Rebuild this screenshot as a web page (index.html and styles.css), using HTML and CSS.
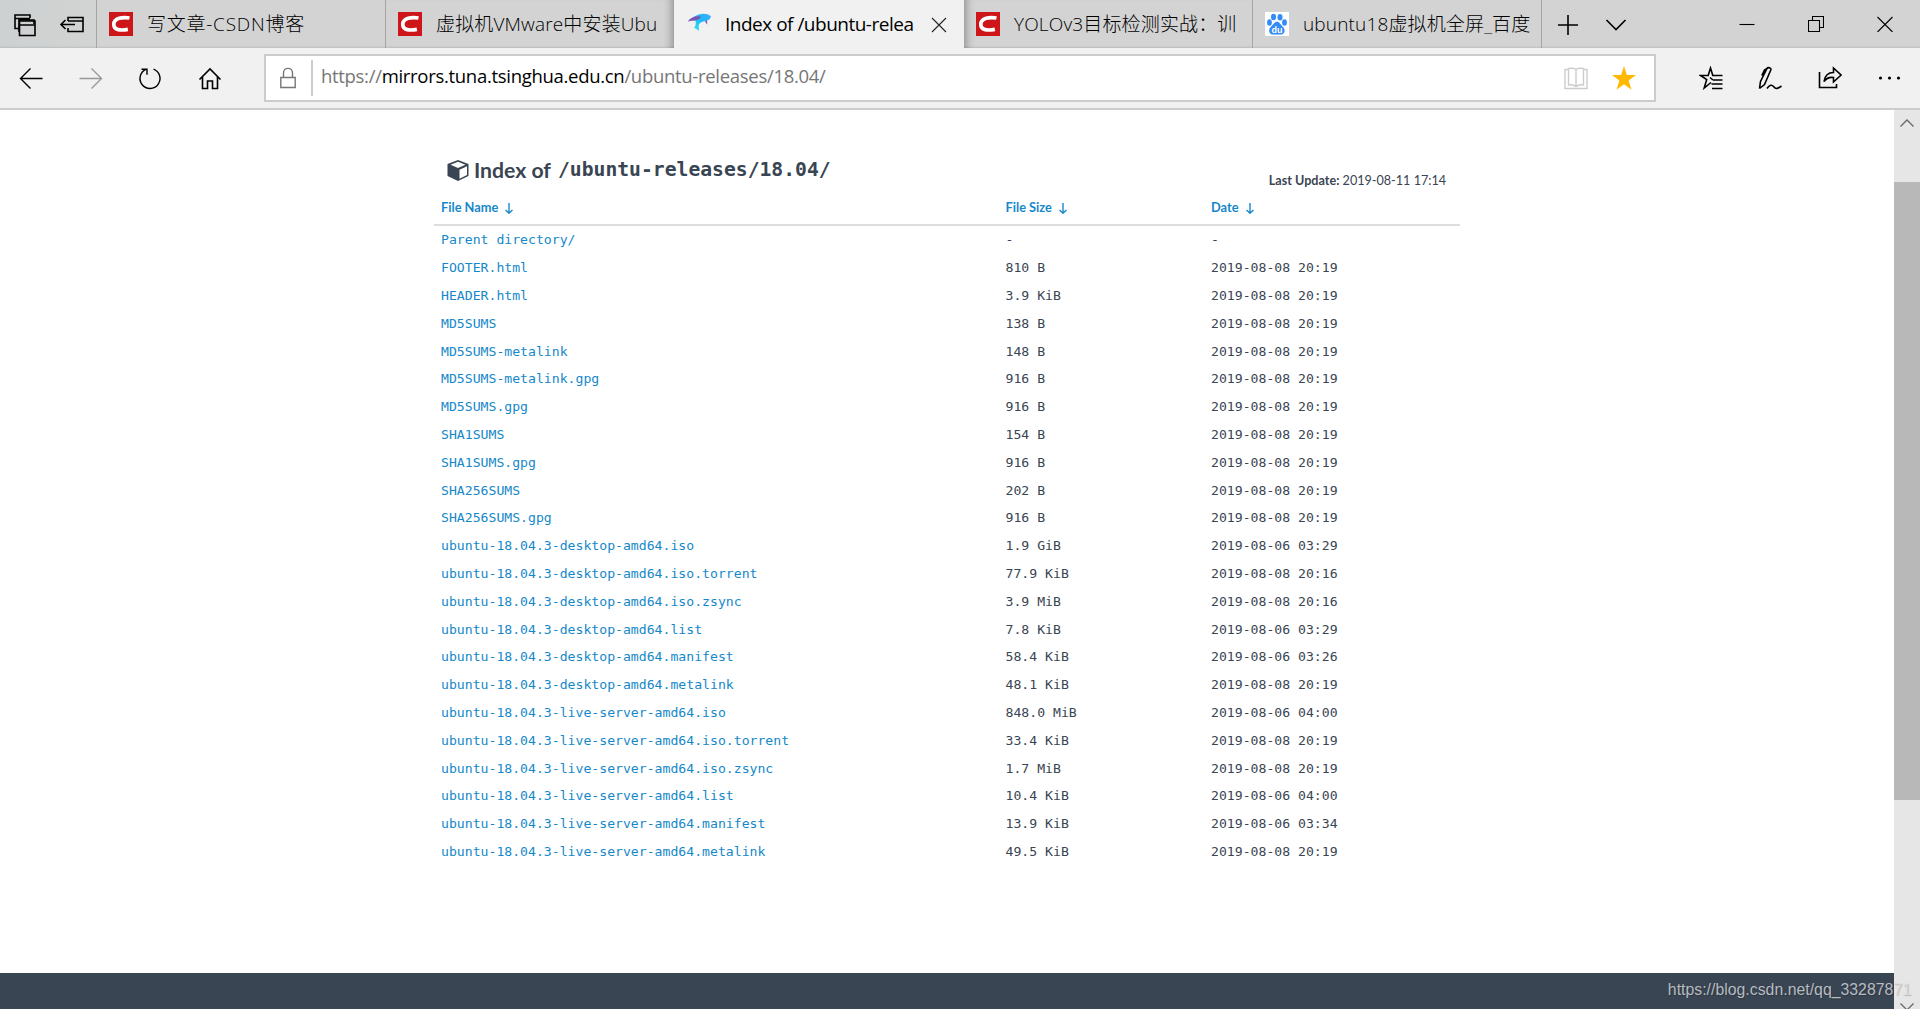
FILE: index.html
```html
<!DOCTYPE html>
<html lang="zh-CN">
<head>
<meta charset="utf-8">
<title>Index of /ubuntu-releases/18.04/</title>
<link rel="stylesheet" href="styles.css">
</head>
<body>
<svg class="defs" aria-hidden="true">
  <symbol id="csdn" viewBox="0 0 24 24"><path fill="#ce1519" d="M0 0h24v24H0z"/><path d="M20.500 6C13.500 4.800 5 6 4.800 12.300 4.700 18.500 12 18.600 18.900 17.400" fill="none" stroke="#fff" stroke-width="3.700"/></symbol>
</svg>
<header class="tabs">
  <div class="tab-tools">
    <svg width="24" height="24" viewBox="0 0 24 24"><g class="line bold"><path d="M5.500 15.500H2V2h15v3M2 5.500h15M6 19V7h15v4M10.500 7H6"/><path d="M6.500 8h15.500v14.500H6.500zM6.500 12h15.500"/></g></svg>
    <svg width="26" height="24" viewBox="0 0 26 24"><g class="line bold"><path d="M9 8V4.500h15v14H9V15M9 8h15M16 11.500H2M6.500 7L2 11.500 6.500 16"/></g></svg>
  </div>
  <div class="tab"><svg class="fav"><use href="#csdn"/></svg><span class="t1">写文章-CSDN博客</span></div>
  <div class="tab before"><svg class="fav"><use href="#csdn"/></svg><span class="t2">虚拟机VMware中安装Ubu</span></div>
  <div class="tab active">
    <svg class="fav" viewBox="0 0 24 24"><defs><linearGradient id="dolphin" x1="0" y1="1" x2="1" y2="0"><stop stop-color="#35e2ef"/><stop offset=".55" stop-color="#1bb7f8"/><stop offset="1" stop-color="#49a9f8"/></linearGradient></defs><path fill="url(#dolphin)" d="M7.500 4.500C12 1 20 .500 24 4.200c-.500 2.800-3 4.600-6.500 5-4 .500-5.800 2.500-5.800 4.800 0 2 .300 3.500.500 5-1.200-1.500-3.500-2-5.200-3.200C10 13 8.500 8 7.500 4.500z"/><path fill="#7655b5" d="M.5 10C3 5.500 8 3.600 14 4.500 12.500 7.500 9 8.800 6.500 8.800 4 8.800 2 9 .5 10z"/><path fill="#8253b2" d="M18 9.200l2-.800.200 4.400z"/></svg>
    <span class="t3">Index of /ubuntu-relea</span>
    <svg class="tab-close" width="16" height="16" viewBox="0 0 16 16"><path class="line" d="M1 1l14 14M15 1L1 15"/></svg>
  </div>
  <div class="tab after"><svg class="fav"><use href="#csdn"/></svg><span class="t4">YOLOv3目标检测实战：训</span></div>
  <div class="tab">
    <svg class="fav" viewBox="0 0 24 24"><path fill="#fff" d="M0 0h24v24H0z"/><g fill="#318cf5"><ellipse cx="8.500" cy="5" rx="2.500" ry="3.300"/><ellipse cx="15" cy="5.200" rx="2.500" ry="3.200"/><ellipse cx="4.500" cy="10.500" rx="2.400" ry="3.200"/><ellipse cx="19.500" cy="10.500" rx="2.400" ry="3.200"/><path d="M12 9.800c2.500 0 3.500 2.700 6 5.200 2.800 2.800 2 7.500-2.200 7.500H8c-4.200 0-5-4.700-2.200-7.500C8.500 12.500 9.500 9.800 12 9.800z"/></g><text class="paw" x="12" y="21" text-anchor="middle">du</text></svg>
    <span class="t5">ubuntu18虚拟机全屏_百度</span>
  </div>
  <div class="tab-actions">
    <svg width="22" height="22" viewBox="0 0 22 22"><path class="line bold" d="M11 1v20M1 11h20"/></svg>
    <svg width="22" height="22" viewBox="0 0 22 22"><path class="line bold" d="M1.500 6l9.500 9.500L20.500 6"/></svg>
  </div>
  <div class="window-actions">
    <svg width="16" height="16" viewBox="0 0 16 16"><path class="line" d="M.500 8.500h15"/></svg>
    <svg width="16" height="16" viewBox="0 0 16 16"><path class="line" d="M.500 4.500h11v11H.500zM4.500 4.500v-4h11v11h-4"/></svg>
    <svg width="16" height="16" viewBox="0 0 16 16"><path class="line" d="M.500 1l15 15M15.500 1L.500 16"/></svg>
  </div>
</header>
<nav class="toolbar">
  <div class="buttons nav-buttons">
    <svg viewBox="0 0 24 24"><path class="line mid" d="M23.500 12.500H1.500M11.500 2.500l-10 10 10 10"/></svg>
    <svg class="disabled" viewBox="0 0 24 24"><path class="line mid" d="M.500 12.500h22M12.500 2.500l10 10-10 10"/></svg>
    <svg viewBox="0 0 24 24"><path class="line mid" d="M15.500 3.100a10 10 0 1 1-7.500.200M3.500 3.200H9v5.500"/></svg>
    <svg viewBox="0 0 24 24"><path class="line bold" d="M1.500 13.500L12 3l10.500 10.500M4.500 11v11.500h5V15h5v7.500h5V11"/></svg>
  </div>
  <div class="address">
    <svg class="lock" viewBox="0 0 16 22"><path class="line mid" d="M.8 10.500h14.400v10H.8zM3.500 10.500V6C3.500-.200 12.500-.200 12.500 6v4.500"/></svg>
    <span class="url">https://<b>mirrors.tuna.tsinghua.edu.cn</b>/ubuntu-releases/18.04/</span>
    <svg class="book" viewBox="0 0 24 24"><path class="line mid" d="M4 3.500H1v19h22v-19h-3M12 21V3.500C10 2 7 2 4.500 2.500V19c3-.500 5.500 0 7.500 1.500 2-1.500 4.500-2 7.500-1.500V2.500C17 2 14 2 12 3.500"/></svg>
    <svg class="star" viewBox="0 0 24 24"><path fill="#ffb900" d="M12 0l2.900 9H24l-7.400 5.500 2.900 9.300L12 18.200l-7.500 5.600 2.900-9.300L0 9h9.100z"/></svg>
  </div>
  <div class="buttons">
    <svg viewBox="0 0 24 24"><path class="line bold" d="M12 16.500l-6.800 5.500 2.500-8.500L1.500 9.500h7.700L11.500 2l2.300 7.500H23.500M14 14h9.500M12.500 18h11M13 22.500h10.500M14 14l-3-2.500"/></svg>
    <svg viewBox="0 0 24 24"><path class="line bold" d="M1.500 22.500l1-7L9 2.500c1-1.800 4.500-.500 3.800 1.500L6.500 18.500l-5 4M9 2.500L6.500 4 3.800 9.500M9 22.500c2.500-3.800 5-4 6.500-2 2.500 3.200 4.500 2 8-.5"/></svg>
    <svg viewBox="0 0 24 24"><path class="line bold" d="M1.500 6v15.500h17V18M6 15.500C7 9 11 6.500 15.500 6.500V2L23 9l-7.500 7v-4.500C12 11 8.500 12 6 15.500z"/></svg>
    <svg viewBox="0 0 24 24"><circle cx="2.500" cy="12" r="1.600"/><circle cx="11.500" cy="12" r="1.600"/><circle cx="20.500" cy="12" r="1.600"/></svg>
  </div>
</nav>
<div class="viewport">
  <main class="page">
    <section class="listing">
      <div class="heading">
        <h1><svg class="cube" viewBox="0 0 22 21"><path fill="#394552" d="M11 0l10.500 4v12L11 21 .5 16V4z"/><path fill="#fff" d="M11 1.700l7.500 3L11 8 3.500 4.700zM12.500 9.700L20 6.300v8.800l-7.500 3.600z"/></svg><span class="label">Index of</span><span class="path">/ubuntu-releases/18.04/</span></h1>
        <p class="update"><strong>Last Update:</strong> 2019-08-11 17:14</p>
      </div>
      <table>
        <thead><tr>
          <th class="name">File Name<svg class="sort" viewBox="0 0 8 11"><path d="M4 0v10M.5 7L4 10.200 7.500 7"/></svg></th>
          <th class="size">File Size<svg class="sort" viewBox="0 0 8 11"><path d="M4 0v10M.5 7L4 10.200 7.500 7"/></svg></th>
          <th>Date<svg class="sort" viewBox="0 0 8 11"><path d="M4 0v10M.5 7L4 10.200 7.500 7"/></svg></th>
        </tr></thead>
        <tbody>
          <tr><td><a>Parent directory/</a></td><td>-</td><td>-</td></tr>
          <tr><td><a>FOOTER.html</a></td><td>810 B</td><td>2019-08-08 20:19</td></tr>
          <tr><td><a>HEADER.html</a></td><td>3.9 KiB</td><td>2019-08-08 20:19</td></tr>
          <tr><td><a>MD5SUMS</a></td><td>138 B</td><td>2019-08-08 20:19</td></tr>
          <tr><td><a>MD5SUMS-metalink</a></td><td>148 B</td><td>2019-08-08 20:19</td></tr>
          <tr><td><a>MD5SUMS-metalink.gpg</a></td><td>916 B</td><td>2019-08-08 20:19</td></tr>
          <tr><td><a>MD5SUMS.gpg</a></td><td>916 B</td><td>2019-08-08 20:19</td></tr>
          <tr><td><a>SHA1SUMS</a></td><td>154 B</td><td>2019-08-08 20:19</td></tr>
          <tr><td><a>SHA1SUMS.gpg</a></td><td>916 B</td><td>2019-08-08 20:19</td></tr>
          <tr><td><a>SHA256SUMS</a></td><td>202 B</td><td>2019-08-08 20:19</td></tr>
          <tr><td><a>SHA256SUMS.gpg</a></td><td>916 B</td><td>2019-08-08 20:19</td></tr>
          <tr><td><a>ubuntu-18.04.3-desktop-amd64.iso</a></td><td>1.9 GiB</td><td>2019-08-06 03:29</td></tr>
          <tr><td><a>ubuntu-18.04.3-desktop-amd64.iso.torrent</a></td><td>77.9 KiB</td><td>2019-08-08 20:16</td></tr>
          <tr><td><a>ubuntu-18.04.3-desktop-amd64.iso.zsync</a></td><td>3.9 MiB</td><td>2019-08-08 20:16</td></tr>
          <tr><td><a>ubuntu-18.04.3-desktop-amd64.list</a></td><td>7.8 KiB</td><td>2019-08-06 03:29</td></tr>
          <tr><td><a>ubuntu-18.04.3-desktop-amd64.manifest</a></td><td>58.4 KiB</td><td>2019-08-06 03:26</td></tr>
          <tr><td><a>ubuntu-18.04.3-desktop-amd64.metalink</a></td><td>48.1 KiB</td><td>2019-08-08 20:19</td></tr>
          <tr><td><a>ubuntu-18.04.3-live-server-amd64.iso</a></td><td>848.0 MiB</td><td>2019-08-06 04:00</td></tr>
          <tr><td><a>ubuntu-18.04.3-live-server-amd64.iso.torrent</a></td><td>33.4 KiB</td><td>2019-08-08 20:19</td></tr>
          <tr><td><a>ubuntu-18.04.3-live-server-amd64.iso.zsync</a></td><td>1.7 MiB</td><td>2019-08-08 20:19</td></tr>
          <tr><td><a>ubuntu-18.04.3-live-server-amd64.list</a></td><td>10.4 KiB</td><td>2019-08-06 04:00</td></tr>
          <tr><td><a>ubuntu-18.04.3-live-server-amd64.manifest</a></td><td>13.9 KiB</td><td>2019-08-06 03:34</td></tr>
          <tr><td><a>ubuntu-18.04.3-live-server-amd64.metalink</a></td><td>49.5 KiB</td><td>2019-08-08 20:19</td></tr>
        </tbody>
      </table>
    </section>
    <footer class="footer"></footer>
  </main>
  <aside class="scrollbar">
    <svg class="arrow" viewBox="0 0 14 8"><path d="M.5 7.500L7 1l6.500 6.500"/></svg>
    <div class="thumb"></div>
    <svg class="arrow down" viewBox="0 0 14 8"><path d="M.5.500L7 7l6.500-6.500"/></svg>
  </aside>
  <div class="watermark">https://blog.csdn.net/qq_33287871</div>
</div>
</body>
</html>
```
FILE: styles.css
```css
* { box-sizing: border-box; }
body {
  margin: 0;
  width: 1920px;
  height: 1009px;
  overflow: hidden;
  display: flex;
  flex-direction: column;
  background: #fff;
  color: #394552;
  font-family: "Open Sans", "Noto Sans CJK SC", sans-serif;
}
svg { display: block; flex: none; }
.defs { display: none; }
.line { fill: none; stroke: currentColor; stroke-width: 1.1; }
.mid { stroke-width: 1.4; }
.bold { stroke-width: 1.6; }

/* Tab strip */
.tabs {
  display: flex;
  flex: none;
  height: 48px;
  background: linear-gradient(90deg, #cdd1d1, #d3d3d3 110px, #d3d3d3);
  color: #000;
  box-shadow: inset 0 -2px 2px -1px #0000001a;
}
.tab-tools { display: flex; width: 96px; padding: 13px 0 0 13px; gap: 22px; }
.tab {
  display: flex;
  align-items: center;
  width: 289px;
  padding-left: 12px;
  border-left: 1px solid #a5a5a5;
  white-space: nowrap;
  font-size: 19px;
  font-weight: 300;
}
.tab.before { box-shadow: inset -9px 0 8px -7px #0005; }
.tab.active { width: 290px; background: #f1f1f1; border: 0; padding-left: 13px; font-weight: 400; }
.tab.after { box-shadow: inset 9px 0 8px -7px #0005; border: 0; width: 288px; }
.fav { width: 24px; height: 24px; margin-right: 14px; }
.tab span { line-height: 26px; padding-bottom: 1px; }
.t1 { letter-spacing: .75px; }
.t2, .t4, .t5 { letter-spacing: .15px; }
.t3 { width: 190px; letter-spacing: -.5px; }
.tab-close { margin: 1px 0 0 16px; color: #222; }
.paw { fill: #fff; font: bold 9px "Liberation Sans", sans-serif; }
.tab-actions {
  display: flex;
  align-items: center;
  width: 172px;
  padding: 1px 0 0 15px;
  gap: 26px;
  border-left: 1px solid #a5a5a5;
}
.window-actions { display: flex; align-items: center; gap: 53px; padding-left: 26px; }

/* Navigation bar */
.toolbar {
  display: flex;
  flex: none;
  align-items: center;
  height: 62px;
  padding-left: 1px;
  background: #f1f1f1;
  border-bottom: 2px solid #ccc;
  color: #000;
}
.buttons { display: grid; grid-template-columns: repeat(4, 59.7px); justify-items: center; margin-left: 25px; }
.nav-buttons { margin: 0 24.2px 0 0; }
.buttons svg { width: 24px; height: 24px; }
.disabled { color: #999; }
.address {
  display: flex;
  align-items: center;
  width: 1392px;
  height: 48px;
  padding-left: 14px;
  background: #fff;
  border: 2px solid #ccc;
}
.lock { width: 16px; height: 22px; color: #777; margin-right: 15px; }
.url {
  display: flex;
  align-items: center;
  width: 1253px;
  height: 36px;
  padding: 0 0 6px 8px;
  border-left: 2px solid #ccc;
  color: #767676;
  font-size: 18.5px;
  letter-spacing: -.3px;
  white-space: nowrap;
}
.url b { color: #000; font-weight: 400; }
.book { width: 24px; height: 24px; color: #ccc; }
.star { width: 24px; height: 24px; margin-left: 24px; }

/* Directory listing */
.viewport { position: relative; display: flex; flex: 1; min-height: 0; }
.page { display: flex; flex-direction: column; width: 1894px; }
.listing { width: 1026px; margin-left: 434px; padding-top: 44px; flex: 1; }
.heading { display: flex; justify-content: space-between; height: 40px; padding: 0 14px 0 13px; }
h1 { display: flex; align-items: center; height: 32px; margin: 0; font: 700 21.2px/32px Lato, sans-serif; white-space: pre; }
.cube { width: 22px; height: 21px; margin-right: 5px; }
.label { width: 84px; }
.path { font: bold 19.7px/32px "DejaVu Sans Mono", monospace; }
.update { margin: 17px 0 0; font: 12.6px/20px Lato, sans-serif; }
table { width: 1026px; table-layout: fixed; border-collapse: separate; border-spacing: 0; text-align: left; }
th { height: 32px; padding: 0 7px 4px; border-bottom: 2px solid #ddd; color: #1688ca; font: bold 12.8px/18px Lato, sans-serif; }
.name { width: 564.5px; }
.size { width: 205.500px; }
.sort { display: inline-block; width: 8px; height: 11px; margin-left: 7px; vertical-align: -2px; fill: none; stroke: currentColor; stroke-width: 1.4; }
td { height: 27.8px; padding: 1px 7px 0; font: 13.150px/20px "DejaVu Sans Mono", monospace; white-space: nowrap; }
a { color: #1688ca; }
.footer { height: 36px; background: #394552; }

/* Scroll bar */
.scrollbar { display: flex; flex-direction: column; align-items: center; width: 26px; background: #e6e6e6; }
.arrow { width: 14px; height: 8px; margin-top: 9px; fill: none; stroke: #666; stroke-width: 1.3; }
.thumb { width: 26px; height: 618px; margin-top: 55px; background: #b8b8b8; flex: none; }
.arrow.down { margin-top: 203px; }
.watermark {
  position: absolute;
  right: 9px;
  bottom: 8px;
  color: #dcdfe1c8;
  font: 15.850px/22px "Liberation Sans", sans-serif;
  text-shadow: 1px 1px 1px #0003;
}
```
